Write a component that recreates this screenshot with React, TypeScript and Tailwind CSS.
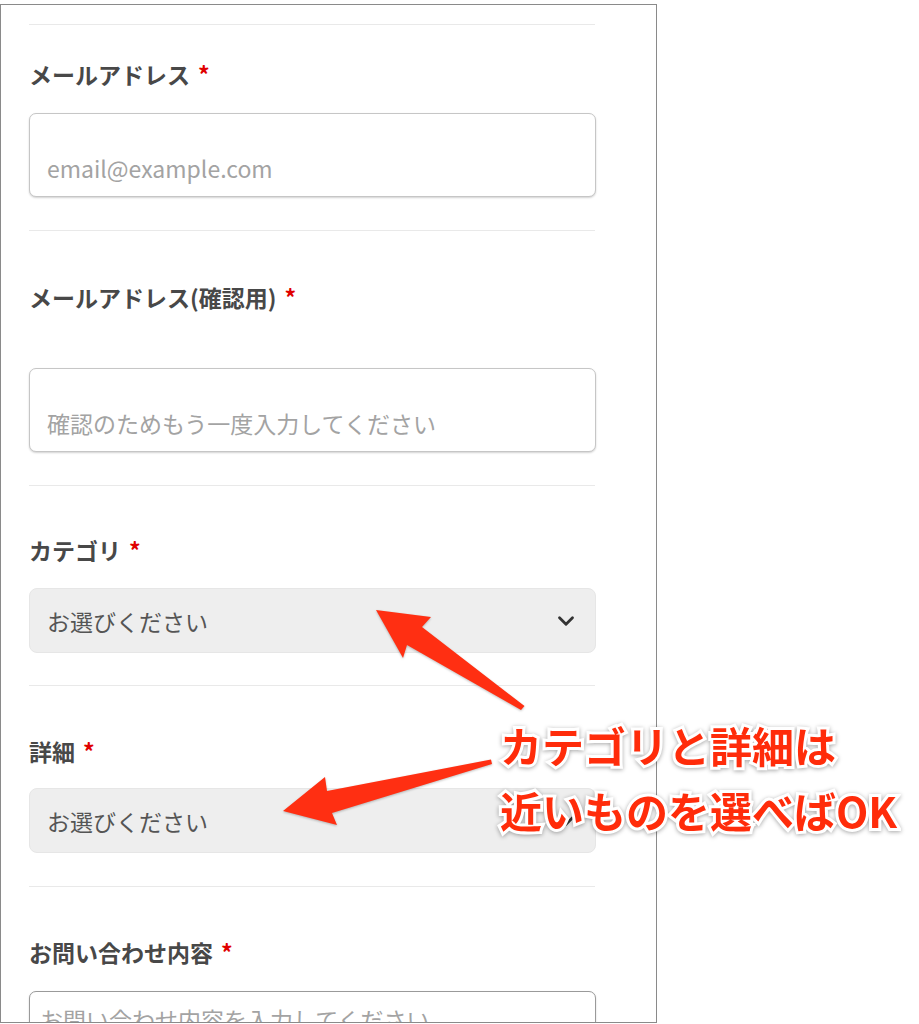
import { ChevronDown } from "lucide-react";

const jp = "font-['Noto_Sans_CJK_JP','Noto_Sans',sans-serif]";

function Label({ text }: { text: string }) {
  return (
    <div className="flex h-[32px] items-center text-[23px] leading-[32px] font-bold text-[#484848]">
      <span>{text}</span>
      <span className="ml-[8px] text-[#e00000]">*</span>
    </div>
  );
}

function TextInput({ placeholder }: { placeholder: string }) {
  return (
    <div className="flex h-[84px] items-end rounded-[7px] border border-[#c6c6c6] bg-white px-[17px] pb-[13px] shadow-[0_1px_2px_rgba(0,0,0,0.18)]">
      <span className="text-[23px] leading-[30px] text-[#a3a3a3]">{placeholder}</span>
    </div>
  );
}

function Select({ value }: { value: string }) {
  return (
    <div className="flex h-[65px] items-center justify-between rounded-[8px] border border-[#e6e6e6] bg-[#eeeeee] pr-[16px] pl-[17px]">
      <span className="text-[23px] leading-[30px] text-[#555555]">{value}</span>
      <ChevronDown className="size-[26px] text-[#333333]" strokeWidth={2.6} />
    </div>
  );
}

function Divider() {
  return <div className="h-px w-[566px] bg-[#e9e9e9]" />;
}

export default function App() {
  return (
    <div className={`relative h-[1024px] w-[919px] overflow-hidden bg-white ${jp}`}>
      {/* phone screenshot frame */}
      <div className="mt-[4px] h-[1019px] w-[657px] overflow-hidden border border-[#8a8a8a] bg-white">
        <div className="pl-[28px]">
          <div className="w-[567px]">
            <div className="pt-[19px]">
              <Divider />
            </div>

            {/* email */}
            <div className="mt-[33px]">
              <Label text="メールアドレス" />
            </div>
            <div className="mt-[23px]">
              <TextInput placeholder="email@example.com" />
            </div>
            <div className="mt-[33px]">
              <Divider />
            </div>

            {/* email confirm */}
            <div className="mt-[50px]">
              <Label text="メールアドレス(確認用)" />
            </div>
            <div className="mt-[55px]">
              <TextInput placeholder="確認のためもう一度入力してください" />
            </div>
            <div className="mt-[33px]">
              <Divider />
            </div>

            {/* category */}
            <div className="mt-[48px]">
              <Label text="カテゴリ" />
            </div>
            <div className="mt-[22px]">
              <Select value="お選びください" />
            </div>
            <div className="mt-[32px]">
              <Divider />
            </div>

            {/* detail */}
            <div className="mt-[49px]">
              <Label text="詳細" />
            </div>
            <div className="mt-[21px]">
              <Select value="お選びください" />
            </div>
            <div className="mt-[33px]">
              <Divider />
            </div>

            {/* message */}
            <div className="mt-[49px]">
              <Label text="お問い合わせ内容" />
            </div>
            <div className="mt-[23px]">
              <div className="h-[120px] rounded-[7px] border border-[#9a9a9a] bg-white px-[10px] pt-[12px] shadow-[0_1px_2px_rgba(0,0,0,0.18)]">
                <span className="text-[23px] leading-[30px] text-[#a3a3a3]">
                  お問い合わせ内容を入力してください
                </span>
              </div>
            </div>
          </div>
        </div>
      </div>

      {/* annotation arrows */}
      <svg
        className="pointer-events-none absolute inset-0 drop-shadow-[0_1px_1px_rgba(0,0,0,0.25)]"
        width="919"
        height="1024"
        viewBox="0 0 919 1024"
      >
        <polygon
          points="524.5,706 422,627 431,617 376,610 403,658 407,645 521,710"
          fill="#ff2f12"
        />
        <polygon
          points="491,759.5 327,791 325,777 283,811 337,825 332,813 492,764"
          fill="#ff2f12"
        />
      </svg>

      {/* annotation text */}
      <div className="absolute top-[712px] left-[500px] text-[42px] leading-[65px] font-bold whitespace-nowrap text-[#ff2c0a] [paint-order:stroke_fill] [-webkit-text-stroke:6px_white] drop-shadow-[0_1px_2px_rgba(0,0,0,0.35)]">
        <div>カテゴリと詳細は</div>
        <div>近いものを選べばOK</div>
      </div>
    </div>
  );
}
